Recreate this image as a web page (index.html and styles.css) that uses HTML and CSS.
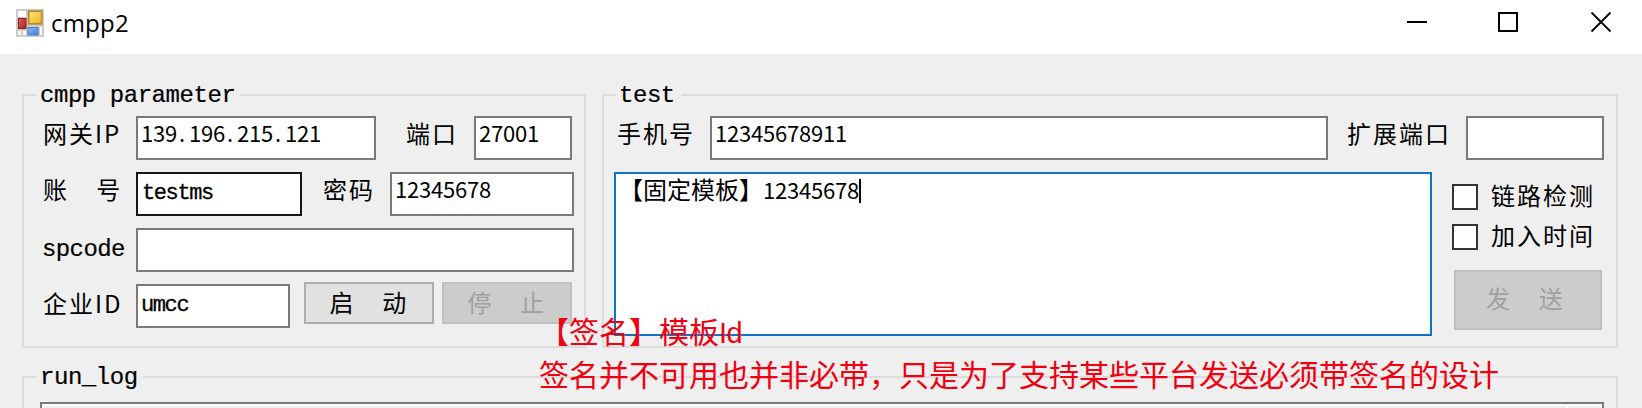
FILE: index.html
```html
<!DOCTYPE html>
<html lang="zh-CN">
<head>
<meta charset="utf-8">
<title>cmpp2</title>
<link rel="stylesheet" href="styles.css">
</head>
<body>
<header class="titlebar">
  <svg class="app-icon" width="28" height="28" viewBox="0 0 28 28">
    <defs>
      <linearGradient id="gold" x1="0" y1="0" x2="1" y2="1"><stop offset="0" stop-color="#ffe58c"/><stop offset="1" stop-color="#f0b414"/></linearGradient>
      <linearGradient id="blue" x1="0" y1="0" x2="1" y2="1"><stop offset="0" stop-color="#8cb8f8"/><stop offset="1" stop-color="#3f7ee0"/></linearGradient>
      <linearGradient id="red" x1="0" y1="0" x2="1" y2="1"><stop offset="0" stop-color="#d86a5a"/><stop offset="1" stop-color="#a81c1c"/></linearGradient>
    </defs>
    <rect width="28" height="28" fill="#cbcbcb"/>
    <path d="M2 2h8v6H2zM2 22h3v4H2zM7 22h3v4H7zM24 18h2v8h-2z" fill="#fff"/>
    <rect x="12.7" y="2.2" width="13" height="12.6" fill="url(#gold)" stroke="#b98c28" stroke-width="1.8"/>
    <rect x="2.5" y="9.5" width="7.5" height="10" fill="url(#red)" stroke="#9a1a1a"/>
    <rect x="12" y="18.5" width="10" height="7.5" fill="url(#blue)" stroke="#4a7cd0"/>
  </svg>
  <h1 class="title">cmpp2</h1>
  <svg class="controls" width="206" height="22" viewBox="0 0 206 22" fill="none" stroke="#000" stroke-width="2">
    <path d="M0 11h20M92 2h18v18H92z"/>
    <path d="M184.5 1.5l19 19M203.5 1.5l-19 19" stroke-width="1.8"/>
  </svg>
</header>
<main class="client">
  <div class="top">
    <section class="group params">
      <h2 class="legend">cmpp parameter</h2>
      <div class="row"><span class="label">网关IP</span><div class="input w-ip">139<span class="dot">.</span>196<span class="dot">.</span>215<span class="dot">.</span>121</div><span class="label label-port">端口</span><div class="input w-port">27001</div></div>
      <div class="row"><span class="label label-user">账　号</span><div class="input input-hot w-user mono">testms</div><span class="label label-pass">密码</span><div class="input grow">12345678</div></div>
      <div class="row"><span class="label latin">spcode</span><div class="input grow"></div></div>
      <div class="row"><span class="label label-ent">企业ID</span><div class="input w-ent mono">umcc</div><div class="buttons"><button class="btn">启　动</button><button class="btn" disabled>停　止</button></div></div>
    </section>
    <section class="group test">
      <h2 class="legend">test</h2>
      <div class="row"><span class="label label-phone">手机号</span><div class="input grow">12345678911</div><span class="label label-ext">扩展端口</span><div class="input w-ext"></div></div>
      <div class="message-row">
        <div class="message">【固定模板】<span class="digits">12345678</span><i class="caret"></i></div>
        <div class="side">
          <label class="check"><i class="box"></i>链路检测</label>
          <label class="check"><i class="box"></i>加入时间</label>
          <button class="btn send" disabled>发　送</button>
        </div>
      </div>
    </section>
  </div>
  <section class="group log">
    <h2 class="legend">run_log</h2>
    <div class="log-box"><div class="log-text"></div><div class="log-scroll"></div></div>
  </section>
</main>
<div class="note">
  <p>【签名】模板<span class="note-id">Id</span></p>
  <p>签名并不可用也并非必带，只是为了支持某些平台发送必须带签名的设计</p>
</div>
</body>
</html>
```

FILE: styles.css
```css
* { box-sizing: border-box; }
body { margin: 0; height: 408px; overflow: hidden; position: relative; background: #efefef; color: #000; font-family: "Noto Sans CJK SC", sans-serif; }
h1, h2, p { margin: 0; font-weight: 400; }

.titlebar { height: 54px; padding: 9px 29px 0 16px; background: #fff; display: flex; align-items: flex-start; }
.title { margin: -2px 0 0 7px; font: 24px/32px "Open Sans", "Noto Sans", sans-serif; letter-spacing: 0.2px; }
.controls { margin: 2px 0 0 auto; }

.client { padding: 40px 24px 0 22px; }
.top { display: flex; gap: 16px; }
.group { position: relative; border: 2px solid #dcdcdc; }
.params { width: 564px; height: 254px; padding: 20px 10px 0 20px; display: flex; flex-direction: column; gap: 12px; }
.test { flex: 1; height: 254px; padding: 20px 12px 0 10px; }
.log { margin-top: 28px; height: 32px; padding: 24px 12px 0 16px; border-bottom: 0; }
.legend { position: absolute; left: 12px; top: -14px; padding: 0 5px 0 4px; background: #efefef; font: 24px/28px "Liberation Mono", monospace; letter-spacing: -0.45px; white-space: pre; -webkit-text-stroke: 0.2px; }
.test .legend { padding-left: 3px; padding-right: 6px; }

.row { display: flex; height: 44px; flex: none; }
.label { flex: none; width: 92px; margin-left: -1px; margin-right: 1px; font-size: 24px; line-height: 34px; letter-spacing: 2px; white-space: nowrap; }
.latin { font-family: "Liberation Mono", monospace; letter-spacing: -0.6px; line-height: 44px; margin-left: -2px; margin-right: 2px; -webkit-text-stroke: 0.2px; }
.label-user { letter-spacing: 2.6px; }
.label-port { width: 98px; padding-left: 31px; }
.label-pass { width: 88px; padding-left: 22px; }
.label-ent { line-height: 38px; }
.label-phone { width: 98px; padding-left: 5px; margin: 0 0 0 -2px; }
.label-ext { width: 138px; padding-left: 20px; }

.input { flex: none; border: 2px solid #7a7a7a; background: #fff; padding-left: 3px; font-size: 22px; line-height: 28px; letter-spacing: -0.2px; white-space: nowrap; }
.dot { display: inline-block; width: 12px; padding-left: 2px; }
.input-hot { border-color: #171717; }
.mono { font-family: "Liberation Mono", monospace; letter-spacing: -1.4px; line-height: 39px; -webkit-text-stroke: 0.3px; }
.grow { flex: 1; }
.w-ip { width: 240px; }
.w-port { width: 98px; }
.w-user { width: 166px; padding-left: 4px; }
.w-ent { width: 154px; }
.w-ext { width: 138px; }

.buttons { display: flex; gap: 8px; margin: -2px 0 0 14px; height: 42px; }
.btn { width: 130px; padding: 0 0 2px; border: 2px solid #adadad; border-radius: 0; background: #e1e1e1; color: #000; font: 24px/36px "Noto Sans CJK SC", sans-serif; letter-spacing: 2.4px; white-space: nowrap; }
.btn:disabled { border-color: #bfbfbf; background: #ccc; color: #a0a0a0; }

.message-row { display: flex; gap: 20px; margin-top: 12px; }
.message { width: 818px; height: 164px; border: 2px solid #0f74c4; background: #fff; padding-left: 3px; font-size: 24px; line-height: 29px; white-space: nowrap; }
.digits { font-size: 22px; letter-spacing: -0.2px; }
.caret { display: inline-block; width: 2px; height: 24px; background: #000; vertical-align: -4px; }
.side { width: 150px; padding-top: 12px; display: flex; flex-direction: column; gap: 14px; }
.check { display: flex; height: 26px; font-size: 24px; line-height: 22px; letter-spacing: 2px; white-space: nowrap; }
.box { flex: none; width: 26px; height: 26px; margin-right: 13px; border: 2px solid #333; background: #fff; }
.send { margin: 6px 0 0 2px; width: 148px; height: 60px; padding: 0 5px 5px 0; }

.log-box { height: 8px; border: 2px solid #7a7a7a; border-bottom: 0; background: #fff; padding: 2px 2px 0; display: flex; gap: 2px; }
.log-text { flex: 1; background: #f0f0f0; }
.log-scroll { width: 32px; background: #f0f0f0; }

/* Red annotation lying over the form */
.note { position: absolute; left: 539px; top: 309px; color: #f00010; font-size: 30px; line-height: 43px; white-space: nowrap; }
.note p { height: 43px; }
.note-id { font-family: "Liberation Sans", sans-serif; font-size: 29px; line-height: 1; letter-spacing: -0.5px; }
```
